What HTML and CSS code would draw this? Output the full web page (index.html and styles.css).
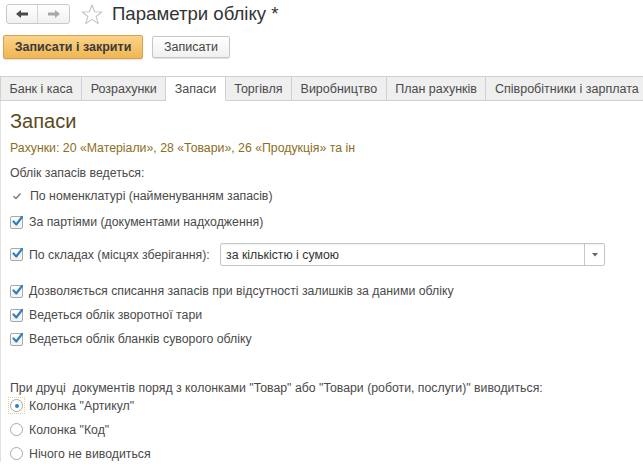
FILE: index.html
```html
<!DOCTYPE html>
<html lang="uk">
<head>
<meta charset="utf-8">
<link rel="stylesheet" href="styles.css">
</head>
<body>
<div class="window">
  <div class="titlebar">
    <div class="navgroup">
      <button class="navbtn back" aria-label="Назад">
        <svg width="14" height="10" viewBox="0 0 14 10"><path d="M1 5 L6 1 L6 3.5 L13 3.5 L13 6.5 L6 6.5 L6 9 Z" fill="#4a4a4a"/></svg>
      </button>
      <button class="navbtn fwd" aria-label="Вперед">
        <svg width="14" height="10" viewBox="0 0 14 10"><path d="M13 5 L8 1 L8 3.5 L1 3.5 L1 6.5 L8 6.5 L8 9 Z" fill="#a8a8a8"/></svg>
      </button>
    </div>
    <svg class="star" width="22" height="21" viewBox="0 0 22 21"><path d="M11 1 L13.6 7.8 L20.8 8 L15.1 12.5 L17.2 19.6 L11 15.4 L4.8 19.6 L6.9 12.5 L1.2 8 L8.4 7.8 Z" fill="none" stroke="#c4c4c4" stroke-width="1.1" stroke-linejoin="round"/></svg>
    <h1 class="title">Параметри обліку *</h1>
  </div>

  <div class="commandbar">
    <button class="btn primary">Записати і закрити</button>
    <button class="btn">Записати</button>
  </div>

  <div class="tabs">
    <div class="tab">Банк і каса</div>
    <div class="tab">Розрахунки</div>
    <div class="tab active">Запаси</div>
    <div class="tab">Торгівля</div>
    <div class="tab">Виробництво</div>
    <div class="tab">План рахунків</div>
    <div class="tab">Співробітники і зарплата</div>
    <div class="tab-rest"></div>
  </div>

  <div class="panel">
    <h2 class="section-title">Запаси</h2>
    <div class="accounts">Рахунки: 20 «Матеріали», 28 «Товари», 26 «Продукція» та ін</div>

    <div class="label">Облік запасів ведеться:</div>

    <div class="row tick-row">
      <svg class="tick" width="10" height="8" viewBox="0 0 10 8"><path d="M1.5 4.2 L4 6.5 L8.5 1.5" fill="none" stroke="#7a7a7a" stroke-width="1.5"/></svg>
      <span>По номенклатурі (найменуванням запасів)</span>
    </div>

    <div class="row check-row r-party">
      <span class="cb"><svg width="13" height="13" viewBox="0 0 13 13"><path d="M2.5 6.5 L5.3 9.5 L11 2" fill="none" stroke="#2f7fc1" stroke-width="2.2" stroke-linecap="round" stroke-linejoin="round"/></svg></span>
      <span>За партіями (документами надходження)</span>
    </div>

    <div class="row check-row r-store">
      <span class="cb"><svg width="13" height="13" viewBox="0 0 13 13"><path d="M2.5 6.5 L5.3 9.5 L11 2" fill="none" stroke="#2f7fc1" stroke-width="2.2" stroke-linecap="round" stroke-linejoin="round"/></svg></span>
      <span class="store-label">По складах (місцях зберігання):</span>
      <div class="select">
        <span class="select-value">за кількістю і сумою</span>
        <span class="select-arrow"><svg width="6" height="4" viewBox="0 0 6 4"><path d="M0 0 L6 0 L3 3.5 Z" fill="#666"/></svg></span>
      </div>
    </div>

    <div class="row check-row r-allow">
      <span class="cb"><svg width="13" height="13" viewBox="0 0 13 13"><path d="M2.5 6.5 L5.3 9.5 L11 2" fill="none" stroke="#2f7fc1" stroke-width="2.2" stroke-linecap="round" stroke-linejoin="round"/></svg></span>
      <span>Дозволяється списання запасів при відсутності залишків за даними обліку</span>
    </div>
    <div class="row check-row r-tight">
      <span class="cb"><svg width="13" height="13" viewBox="0 0 13 13"><path d="M2.5 6.5 L5.3 9.5 L11 2" fill="none" stroke="#2f7fc1" stroke-width="2.2" stroke-linecap="round" stroke-linejoin="round"/></svg></span>
      <span>Ведеться облік зворотної тари</span>
    </div>
    <div class="row check-row r-tight">
      <span class="cb"><svg width="13" height="13" viewBox="0 0 13 13"><path d="M2.5 6.5 L5.3 9.5 L11 2" fill="none" stroke="#2f7fc1" stroke-width="2.2" stroke-linecap="round" stroke-linejoin="round"/></svg></span>
      <span>Ведеться облік бланків суворого обліку</span>
    </div>

    <div class="label print-label">При друці&nbsp; документів поряд з колонками "Товар" або "Товари (роботи, послуги)" виводиться:</div>

    <div class="row radio-row first">
      <span class="radio-focus"><span class="radio checked"></span></span>
      <span>Колонка "Артикул"</span>
    </div>
    <div class="row radio-row">
      <span class="radio-focus plain"><span class="radio"></span></span>
      <span>Колонка "Код"</span>
    </div>
    <div class="row radio-row">
      <span class="radio-focus plain"><span class="radio"></span></span>
      <span>Нічого не виводиться</span>
    </div>
  </div>
</div>
</body>
</html>
```

FILE: styles.css
```css
html, body {
  margin: 0;
  padding: 0;
  background: #ffffff;
}
body {
  font-family: "Liberation Sans", Arial, sans-serif;
  font-size: 12.3px;
  color: #4a4a4a;
  width: 643px;
  height: 472px;
  overflow: hidden;
}
.window {
  display: flex;
  flex-direction: column;
}

/* title bar */
.titlebar {
  display: flex;
  align-items: center;
  height: 24px;
  padding: 2px 0 0 6px;
}
.navgroup {
  display: flex;
  height: 20px;
  border: 1px solid #c9c9c9;
  border-radius: 3px;
  background: linear-gradient(#ffffff, #f1f1f1);
  box-sizing: border-box;
}
.navbtn {
  width: 31px;
  height: 18px;
  border: 0;
  padding: 0;
  margin: 0;
  background: transparent;
  display: flex;
  align-items: center;
  justify-content: center;
}
.navbtn.back {
  border-right: 1px solid #d6d6d6;
}
.star {
  margin-left: 11px;
}
.title {
  margin: 0 0 0 9px;
  font-size: 18.6px;
  font-weight: normal;
  color: #333333;
  line-height: 20px;
}

/* command bar */
.commandbar {
  display: flex;
  align-items: center;
  gap: 9px;
  padding: 8px 0 0 3px;
  height: 26px;
}
.btn {
  font-family: "Liberation Sans", Arial, sans-serif;
  font-size: 12.5px;
  color: #444444;
  height: 22px;
  width: 78px;
  padding: 0;
  border: 1px solid #c6c6c6;
  border-radius: 2px;
  background: linear-gradient(#ffffff, #f0f0f0);
  box-shadow: 0 1px 1px rgba(0,0,0,0.12);
}
.btn.primary {
  height: 24px;
  width: 140px;
  font-weight: bold;
  color: #3b3b3b;
  border-color: #d9a24a;
  background: linear-gradient(#fbd38a, #f0b653);
}

/* tabs */
.tabs {
  display: flex;
  margin-top: 16px;
  height: 25px;
  box-sizing: border-box;
}
.tab {
  height: 25px;
  box-sizing: border-box;
  padding: 0 8.5px;
  line-height: 24px;
  font-size: 12.5px;
  border: 1px solid #d0d0d0;
  border-left: 0;
  background: #efefef;
  color: #4a4a4a;
  white-space: nowrap;
}
.tab:first-child {
  border-left: 1px solid #d0d0d0;
  padding-left: 8.5px;
}
.tab.active {
  background: #ffffff;
  border-bottom-color: #ffffff;
}
.tab-rest {
  flex: 1;
  border-bottom: 1px solid #d0d0d0;
}

/* panel */
.panel {
  border-left: 1px solid #e2e2e2;
  padding: 0 0 0 9px;
  display: flex;
  flex-direction: column;
}
.section-title {
  margin: 8px 0 0 0;
  font-size: 20px;
  font-weight: normal;
  color: #5a4a1c;
  line-height: 24px;
}
.accounts {
  color: #8c6e1e;
  margin-top: 8px;
  line-height: 14px;
}
.label {
  margin-top: 11px;
  line-height: 14px;
}
.row {
  display: flex;
  align-items: center;
  line-height: 14px;
}
.tick-row {
  margin-top: 9px;
  padding-left: 2px;
}
.tick {
  margin-right: 8px;
}
.check-row .cb {
  width: 13px;
  height: 13px;
  border: 1px solid #a9a9a9;
  border-radius: 2px;
  background: linear-gradient(#ffffff, #f2f2f2);
  margin-right: 6px;
  display: flex;
  align-items: center;
  justify-content: center;
  box-sizing: border-box;
  overflow: visible;
}
.check-row .cb svg {
  margin-left: 2px;
  margin-top: -2px;
  flex: none;
}
.r-party {
  margin-top: 12px;
}
.r-store {
  margin-top: 14px;
}
.store-label {
  width: 191px;
}
.select {
  width: 385px;
  height: 23px;
  box-sizing: border-box;
  border: 1px solid #c6c6c6;
  border-radius: 2px;
  display: flex;
  align-items: center;
  color: #333333;
  box-shadow: inset 0 1px 1px rgba(0,0,0,0.05);
}
.select-value {
  flex: 1;
  padding-left: 5px;
}
.select-arrow {
  width: 19px;
  height: 21px;
  border-left: 1px solid #c6c6c6;
  display: flex;
  align-items: center;
  justify-content: center;
}
.r-allow {
  margin-top: 18px;
}
.r-tight {
  margin-top: 10px;
}
.print-label {
  margin-top: 35px;
}
.radio-row {
  margin-top: 7px;
}
.radio-row.first {
  margin-top: 2px;
}
.radio-focus {
  width: 17px;
  height: 17px;
  box-sizing: border-box;
  border: 1px dotted #e3cf8f;
  display: flex;
  align-items: center;
  justify-content: center;
  margin-left: -2px;
  margin-right: 4px;
}
.radio-focus.plain {
  border-color: transparent;
}
.radio {
  width: 13px;
  height: 13px;
  box-sizing: border-box;
  border: 1px solid #a9a9a9;
  border-radius: 50%;
  background: #ffffff;
  position: relative;
}
.radio.checked::after {
  content: "";
  position: absolute;
  left: 3.5px;
  top: 3.5px;
  width: 4px;
  height: 4px;
  border-radius: 50%;
  background: #2f7fc1;
}
```
